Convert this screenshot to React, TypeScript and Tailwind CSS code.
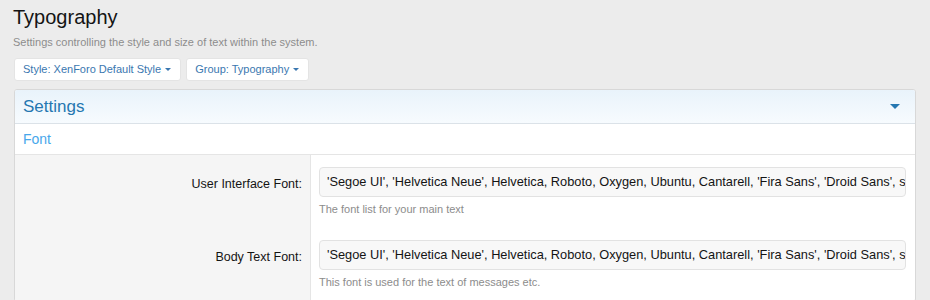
const fontList =
  "'Segoe UI', 'Helvetica Neue', Helvetica, Roboto, Oxygen, Ubuntu, Cantarell, 'Fira Sans', 'Droid Sans', sans-serif";

const rows = [
  { label: "User Interface Font:", value: fontList, hint: "The font list for your main text" },
  { label: "Body Text Font:", value: fontList, hint: "This font is used for the text of messages etc." },
];

function Caret({ className }: { className?: string }) {
  return (
    <svg viewBox="0 0 10 5" className={className} aria-hidden>
      <path d="M0 0h10L5 5z" fill="currentColor" />
    </svg>
  );
}

function MenuButton({ label }: { label: string }) {
  return (
    <button
      type="button"
      className="flex h-[23px] items-center gap-[4px] rounded-[3px] border border-[#e4e4e4] bg-white pr-[9px] pl-[8px] text-[11px] text-[#3a77b0]"
    >
      {label}
      <Caret className="h-[3px] w-[6px]" />
    </button>
  );
}

export default function App() {
  return (
    <div className="min-h-[300px] bg-[#ececec] px-[13px] pt-[5px] font-['Liberation_Sans',Arial,sans-serif] text-[#141414]">
      <h1 className="text-[20px] leading-[24px] font-normal">Typography</h1>
      <p className="mt-[5px] text-[11px] leading-[16px] text-[#8c8c8c]">
        Settings controlling the style and size of text within the system.
      </p>

      <div className="mt-[8px] flex gap-[5px] pl-[1px]">
        <MenuButton label="Style: XenForo Default Style" />
        <MenuButton label="Group: Typography" />
      </div>

      <div className="mt-[8px] mx-[1px] overflow-hidden rounded-[3px] border border-[#d8d8d8] bg-white">
        <div className="flex h-[34px] items-center justify-between border-b border-[#dbe2e8] bg-gradient-to-b from-[#e9f3fb] to-[#f7fbfe] pl-[8px] pr-[15px]">
          <h2 className="text-[17px] leading-[20px] font-normal text-[#2577b1]">Settings</h2>
          <Caret className="h-[5px] w-[10px] text-[#2577b1]" />
        </div>

        <div className="flex h-[31px] items-center border-b border-[#e5e5e5] pl-[8px]">
          <h3 className="text-[14px] leading-[18px] font-normal text-[#47a7eb]">Font</h3>
        </div>

        {rows.map((r) => (
          <div key={r.label} className="flex">
            <div className="w-[296px] shrink-0 border-r border-[#e5e5e5] bg-[#f5f5f5] pt-[21px] pr-[8px] text-right text-[12.5px] leading-[16px]">
              {r.label}
            </div>
            <div className="min-w-0 flex-1 pt-[12px] pr-[9px] pb-[12px] pl-[8px]">
              <div className="flex h-[30px] items-center overflow-hidden whitespace-nowrap rounded-[4px] border border-[#e2e2e2] bg-[#f8f8f8] px-[7px] text-[12.8px] text-[#141414]">
                {r.value}
              </div>
              <p className="mt-[5px] text-[11px] leading-[14px] text-[#8c8c8c]">{r.hint}</p>
            </div>
          </div>
        ))}
      </div>
    </div>
  );
}
